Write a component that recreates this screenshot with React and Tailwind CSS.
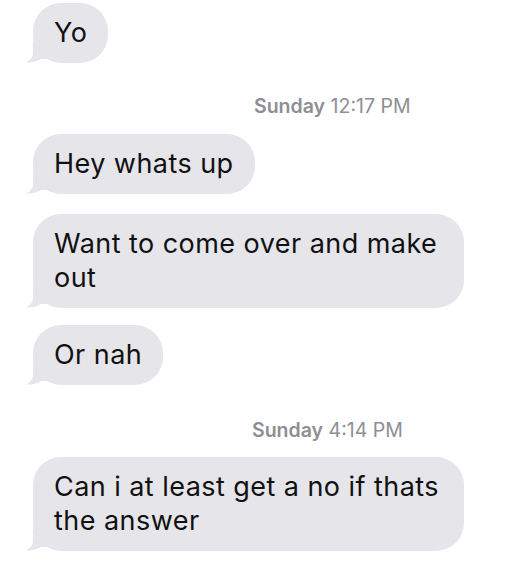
const font = { fontFamily: "Inter, 'Liberation Sans', sans-serif" };

const Bubble = ({ children, className = "" }) => (
  <div className={`relative self-start max-w-[431px] ${className}`}>
    <svg
      className="absolute left-[-7px] bottom-0"
      width="24"
      height="22"
      viewBox="0 0 24 22"
    >
      <path
        d="M7 0 L7 12 C7 16 4 19.5 0 21.5 C6 22 11 20.5 15 18 L24 18 L24 0 Z"
        fill="#e5e5ea"
      />
    </svg>
    <div className="relative rounded-[28px] bg-[#e5e5ea] px-[21px] py-[13px] text-[27px] leading-[34px] tracking-[0.45px] text-[#111111]">
      {children}
    </div>
  </div>
);

const Stamp = ({ day, time, className = "" }) => (
  <div className={`text-[19.5px] leading-[24px] text-[#8e8e93] ${className}`}>
    <span className="font-semibold">{day}</span> {time}
  </div>
);

export default function App() {
  return (
    <div
      className="w-[532px] h-[562px] bg-white overflow-hidden flex flex-col pl-[33px] pt-[3px]"
      style={font}
    >
      <Bubble>Yo</Bubble>
      <Stamp day="Sunday" time="12:17 PM" className="ml-[221px] mt-[31px]" />
      <Bubble className="mt-[16px]">Hey whats up</Bubble>
      <Bubble className="mt-[20px]">Want to come over and make out</Bubble>
      <Bubble className="mt-[17px]">Or nah</Bubble>
      <Stamp day="Sunday" time="4:14 PM" className="ml-[219px] mt-[33px]" />
      <Bubble className="mt-[15px]">Can i at least get a no if thats the answer</Bubble>
    </div>
  );
}
